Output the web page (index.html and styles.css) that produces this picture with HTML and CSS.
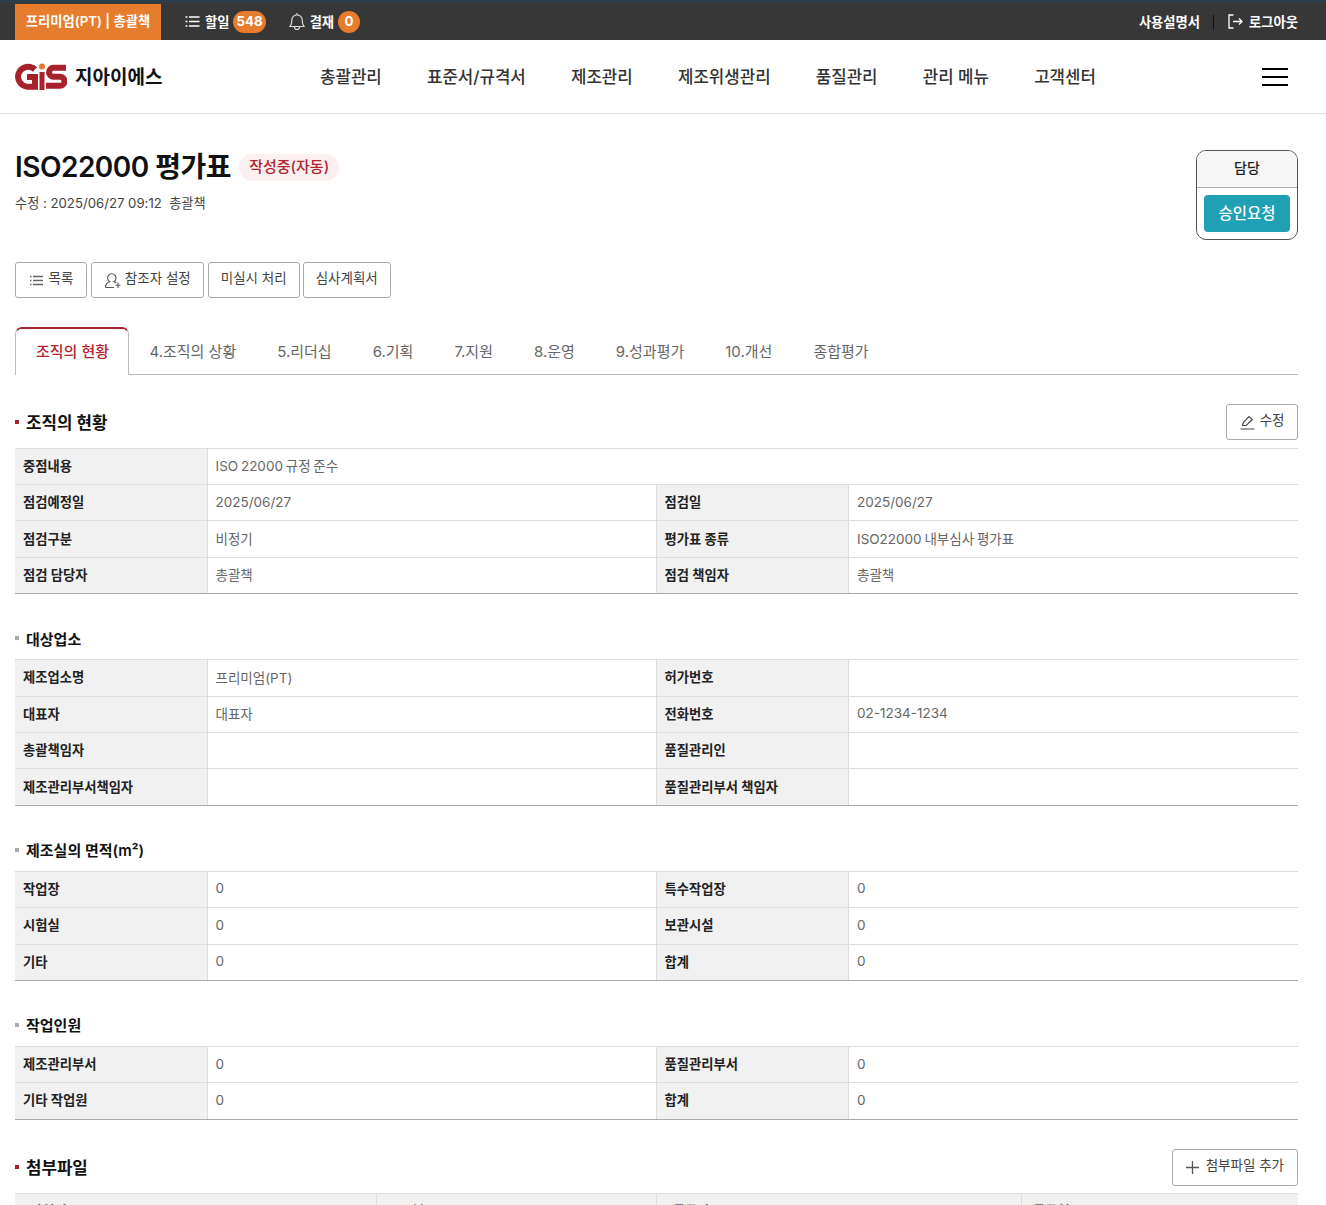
FILE: index.html
```html
<!DOCTYPE html>
<html lang="ko">
<head>
<meta charset="utf-8">
<title>ISO22000 평가표</title>
<link rel="stylesheet" href="styles.css">
</head>
<body>
<div class="topbar">
  <div class="top-left">
    <div class="company">프리미엄(PT) | 총괄책</div>
    <div class="top-item top-todo">
      <svg width="15" height="15" viewBox="0 0 15 15"><path d="M.5 3h2M.5 7.500h2M.5 12h2M4 3h10.500M4 7.500h10.500M4 12h10.500" stroke="#fff" stroke-width="1.500" fill="none"/></svg>
      <span>할일</span><span class="count">548</span>
    </div>
    <div class="top-item top-pay">
      <svg width="16" height="19" viewBox="0 0 16 19"><path d="M1 14.500c1.300-1.500 1.800-3 1.800-6.500a5.200 5.200 0 0 1 10.400 0c0 3.500.5 5 1.800 6.500zM5.500 15a2.500 2.500 0 0 0 5 0M8 1v1" stroke="#ddd" stroke-width="1.200" fill="none"/></svg>
      <span>결재</span><span class="count">0</span>
    </div>
  </div>
  <div class="top-right">
    <span>사용설명서</span>
    <i class="sep"></i>
    <svg width="15" height="15" viewBox="0 0 15 15"><path d="M5.500 1H1v13h4.500M5 7.500h9M11 4.500l3 3-3 3" stroke="#fff" stroke-width="1.300" fill="none"/></svg>
    <span>로그아웃</span>
  </div>
</div>
<header class="mainhead">
  <div class="logo">
    <svg width="52" height="27" viewBox="0 0 52 27"><path d="M20 6.500A10 10 0 1 0 12 23.700H20V14H12" stroke="#a8222c" stroke-width="6" fill="none"/><circle cx="27" cy="3.500" r="3" fill="#e8792e"/><rect x="24.500" y="9" width="5" height="18" fill="#a8222c"/><path d="M51 4.500H38.500a4.500 4.500 0 0 0 0 9h6.500a4.500 4.500 0 0 1 0 9H31" stroke="#a8222c" stroke-width="6" fill="none" transform="translate(0 .3)"/></svg>
    <span class="logo-text">지아이에스</span>
  </div>
  <nav class="gnb">
    <a>총괄관리</a><a>표준서/규격서</a><a>제조관리</a><a>제조위생관리</a><a>품질관리</a><a>관리 메뉴</a><a>고객센터</a>
  </nav>
  <div class="burger"><i></i><i></i><i></i></div>
</header>
<main class="page">
  <div class="title-row">
    <div>
      <div class="title-line"><h1>ISO22000 평가표</h1><span class="status">작성중(자동)</span></div>
      <p class="meta">수정 : 2025/06/27 09:12 &nbsp;총괄책</p>
    </div>
    <div class="approval">
      <div class="approval-head">담당</div>
      <div class="approval-body"><button class="approve">승인요청</button></div>
    </div>
  </div>
  <div class="actions">
    <a class="btn btn-list"><svg width="15" height="15" viewBox="0 0 15 15"><path d="M1 3.500h1.500M1 7.500h1.500M1 11.500h1.500M4 3.500h10M4 7.500h10M4 11.500h10" stroke="#666" stroke-width="1.300" fill="none"/></svg><span>목록</span></a>
    <a class="btn btn-tight"><svg width="18" height="18" viewBox="0 0 18 18"><path d="M1.500 16.500c0-3.200 1.600-5 4.300-5.800a4.200 4.200 0 1 1 4 0c1 .3 1.800.7 2.400 1.300M1.500 16.500h8.500M14 11.500v5.500M11.500 14.200h5" stroke="#555" stroke-width="1.100" fill="none"/></svg><span>참조자 설정</span></a>
    <a class="btn"><span>미실시 처리</span></a>
    <a class="btn btn-last"><span>심사계획서</span></a>
  </div>
  <div class="tabs">
    <a class="tab active">조직의 현황</a><a class="tab">4.조직의 상황</a><a class="tab">5.리더십</a><a class="tab">6.기획</a><a class="tab">7.지원</a><a class="tab">8.운영</a><a class="tab">9.성과평가</a><a class="tab">10.개선</a><a class="tab">종합평가</a>
  </div>

  <div class="sec-head first">
    <h2 class="h-main">조직의 현황</h2>
    <a class="btn btn-edit"><svg width="15" height="15" viewBox="0 0 15 15"><path d="M.5 14h14M2.500 10.500l.8-3L9 1.500l3.200 3.200-6 5.800z" stroke="#444" stroke-width="1.200" fill="none"/></svg><span>수정</span></a>
  </div>
  <table class="info">
    <colgroup><col class="c1"><col class="c2"><col class="c3"><col class="c4"></colgroup>
    <tr><th>중점내용</th><td colspan="3">ISO 22000 규정 준수</td></tr>
    <tr><th>점검예정일</th><td>2025/06/27</td><th>점검일</th><td>2025/06/27</td></tr>
    <tr><th>점검구분</th><td>비정기</td><th>평가표 종류</th><td>ISO22000 내부심사 평가표</td></tr>
    <tr><th>점검 담당자</th><td>총괄책</td><th>점검 책임자</th><td>총괄책</td></tr>
  </table>

  <h3 class="h-sub">대상업소</h3>
  <table class="info">
    <colgroup><col class="c1"><col class="c2"><col class="c3"><col class="c4"></colgroup>
    <tr><th>제조업소명</th><td>프리미엄(PT)</td><th>허가번호</th><td></td></tr>
    <tr><th>대표자</th><td>대표자</td><th>전화번호</th><td>02-1234-1234</td></tr>
    <tr><th>총괄책임자</th><td></td><th>품질관리인</th><td></td></tr>
    <tr><th>제조관리부서책임자</th><td></td><th>품질관리부서 책임자</th><td></td></tr>
  </table>

  <h3 class="h-sub">제조실의 면적(m²)</h3>
  <table class="info">
    <colgroup><col class="c1"><col class="c2"><col class="c3"><col class="c4"></colgroup>
    <tr><th>작업장</th><td>0</td><th>특수작업장</th><td>0</td></tr>
    <tr><th>시험실</th><td>0</td><th>보관시설</th><td>0</td></tr>
    <tr><th>기타</th><td>0</td><th>합계</th><td>0</td></tr>
  </table>

  <h3 class="h-sub">작업인원</h3>
  <table class="info">
    <colgroup><col class="c1"><col class="c2"><col class="c3"><col class="c4"></colgroup>
    <tr><th>제조관리부서</th><td>0</td><th>품질관리부서</th><td>0</td></tr>
    <tr><th>기타 작업원</th><td>0</td><th>합계</th><td>0</td></tr>
  </table>

  <div class="sec-head files">
    <h2 class="h-main">첨부파일</h2>
    <a class="btn btn-add"><svg width="13" height="13" viewBox="0 0 13 13"><path d="M6.500 0v13M0 6.500h13" stroke="#555" stroke-width="1.300" fill="none"/></svg><span>첨부파일 추가</span></a>
  </div>
  <table class="files-table">
    <colgroup><col class="f1"><col class="f2"><col class="f3"><col class="f4"></colgroup>
    <tr><th>파일명</th><th>구분</th><th>등록자</th><th>등록일</th></tr>
  </table>
</main>
</body>
</html>
```
FILE: styles.css
```css
* { box-sizing: border-box; }
html, body { margin: 0; padding: 0; }
body {
  font-family: Inter, "Noto Sans CJK KR", sans-serif;
  color: #222;
  background: #fff;
  height: 1205px;
  overflow: hidden;
}
.topbar {
  height: 40px;
  background: #373737;
  border-top: 3px solid #2a3f47;
  display: flex;
  justify-content: space-between;
  padding: 0 28px 0 15px;
  color: #fff;
  font-size: 13.300px;
  font-weight: 600;
}
.top-left, .top-right { display: flex; align-items: center; }
.top-left span, .top-right span { padding-bottom: 1px; }
.company {
  background: #e67c2e;
  width: 146px;
  height: 36px;
  line-height: 34px;
  text-align: center;
  font-size: 13.300px;
  margin-top: 1px;
}
.top-item { display: flex; align-items: center; gap: 4px; }
.top-todo { margin-left: 24px; gap: 5px; }
.top-pay { margin-left: 23px; gap: 5px; }
.top-item .count { margin-left: -1px; }
.top-left .count {
  background: #e67c2e;
  border-radius: 11px;
  height: 22px;
  min-width: 22px;
  padding: 0 3px;
  line-height: 21px;
  text-align: center;
  font-size: 13.300px;
  font-weight: 700;
}
.sep { width: 1px; height: 14px; background: #111; margin: 0 14px 0 13px; }
.top-right svg { margin-right: 6px; }
.mainhead {
  height: 74px;
  border-bottom: 1px solid #ddd;
  padding: 0 38px 0 15px;
  display: flex;
  align-items: center;
}
.logo { display: flex; align-items: center; gap: 8px; width: 305px; }
.logo-text { font-size: 19px; font-weight: 700; color: #111; padding-bottom: 2px; }
.gnb { display: flex; gap: 45.200px; font-size: 16.800px; font-weight: 500; color: #333; padding-bottom: 2px; }
.burger { margin-left: auto; width: 26px; display: flex; flex-direction: column; gap: 6px; }
.burger i { display: block; height: 2px; background: #000; }
.page { padding: 0 28px 0 15px; }
.title-row { display: flex; justify-content: space-between; padding-top: 36px; height: 148px; }
.title-line { display: flex; align-items: center; gap: 8px; height: 34px; }
h1 { margin: 0; font-size: 28px; line-height: 34px; font-weight: 600; color: #111; letter-spacing: -.5px; }
.status {
  background: #fbeff0;
  color: #b0262f;
  font-size: 15px;
  font-weight: 500;
  border-radius: 14px;
  height: 27px;
  line-height: 26px;
  padding: 0 10px;
  margin-top: 1px;
}
.meta { margin: 10px 0 0; font-size: 13.200px; line-height: 18px; color: #444; }
.approval {
  width: 102px;
  height: 90px;
  border: 1px solid #555;
  border-radius: 10px;
  overflow: hidden;
}
.approval-head {
  height: 37px;
  background: #f6f6f6;
  border-bottom: 1px solid #aaa;
  text-align: center;
  font-size: 14px;
  font-weight: 500;
  line-height: 34px;
}
.approval-body { padding: 7px; }
.approve {
  width: 86px;
  height: 37px;
  border: 0;
  border-radius: 4px;
  background: #1fa0b5;
  color: #fff;
  padding: 0 0 3px;
  font: 500 15.500px Inter, "Noto Sans CJK KR", sans-serif;
}
.actions { display: flex; gap: 4px; height: 36px; }
.btn {
  display: inline-flex;
  align-items: center;
  justify-content: center;
  gap: 5px;
  height: 36px;
  padding: 0 12px;
  border: 1px solid #aaa;
  border-radius: 3px;
  font-size: 13.500px;
  color: #444;
  background: #fff;
}
.btn span { padding-bottom: 6px; }
.btn-list { padding: 0 12.500px; }
.btn-tight { gap: 3px; padding: 0 12px; }
.btn-last { margin-left: -1px; }
.btn-edit { padding: 0 12.500px; }
.btn-add { gap: 7px; height: 37px; padding: 0 13px; }
.tabs {
  display: flex;
  margin-top: 29px;
  height: 48px;
  border-bottom: 1px solid #bbb;
}
.tab {
  padding: 15px 20.500px 0;
  font-size: 15px;
  line-height: 20px;
  color: #666;
}
.tab.active {
  height: 48px;
  padding: 13px 19px 0 20px;
  color: #b0262f;
  font-weight: 500;
  background: #fff;
  border: 1px solid #bbb;
  border-top: 2px solid #a8222c;
  border-bottom: 0;
  border-radius: 7px 7px 0 0;
}
.sec-head { display: flex; justify-content: space-between; align-items: center; }
.sec-head.first { margin-top: 29px; height: 36px; margin-bottom: 7.600px; }
.sec-head.files { margin-top: 30.200px; height: 37px; margin-bottom: 7px; }
.h-main, .h-sub {
  margin: 0;
  display: flex;
  align-items: center;
  color: #111;
  font-weight: 600;
}
.h-main { font-size: 16.800px; }
.h-sub { font-size: 15px; margin-top: 33px; margin-bottom: 9px; height: 24px; }
.h-main::before, .h-sub::before {
  content: "";
  width: 4px;
  height: 4px;
  margin-right: 7px;
  background: #a8222c;
}
.h-sub::before { background: #aaa; }
.info, .files-table {
  width: 100%;
  table-layout: fixed;
  border-collapse: separate;
  border-spacing: 0;
  font-size: 13.500px;
}
.info th, .info td {
  height: 36.400px;
  padding: 0 8px 2px;
  border-top: 1px solid #ddd;
}
.info tr:last-child th, .info tr:last-child td {
  box-shadow: 0 1px 0 #aaa;
}
.info th {
  background: #f1f1f1;
  text-align: left;
  font-weight: 600;
  color: #222;
  border-right: 1px solid #ddd;
  font-size: 13.300px;
}
.info td {
  color: #666;
  word-spacing: -1px;
  border-right: 1px solid #ddd;
}
.info td:last-child { border-right: 0; }
.c1 { width: 192.500px; }
.c2 { width: 449px; }
.c3 { width: 192.500px; }
.files-table th {
  background: #f1f1f1;
  height: 36px;
  font-size: 13.300px;
  font-weight: 600;
  text-align: left;
  padding: 0 0 2px 15px;
  border-top: 1px solid #ddd;
  border-right: 1px solid #ddd;
}
.files-table th:nth-child(2) { padding-left: 23px; }
.files-table th:nth-child(3) { padding-left: 16px; }
.files-table th:nth-child(4) { padding-left: 11px; border-right: 0; }
.f1 { width: 362px; }
.f2 { width: 280px; }
.f3 { width: 365px; }
```
